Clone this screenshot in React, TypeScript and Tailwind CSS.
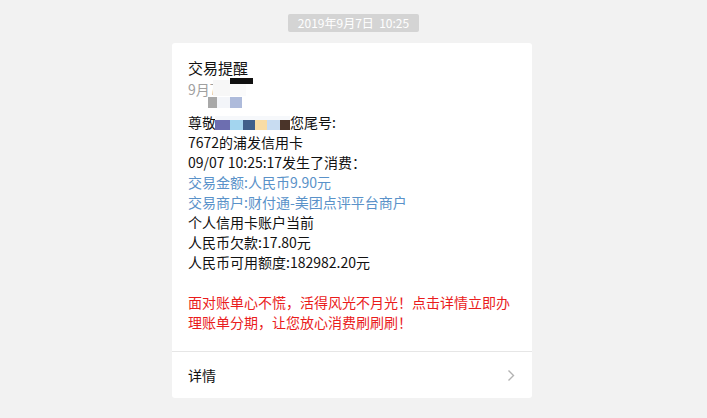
import React from "react";

export default function App() {
  const font = { fontFamily: '"Microsoft YaHei", "Noto Sans CJK SC", "Noto Sans", sans-serif' };
  return (
    <div className="min-h-screen w-full bg-[#f2f2f2] pt-[14px] flex flex-col items-center" style={font}>
      <div className="h-[18px] px-[10px] bg-[#d4d4d4] text-white text-[12px] leading-[18px] whitespace-pre rounded-[2px]">
        2019年9月7日  10:25
      </div>
      <div className="mt-[11px] mr-[3px] w-[360px] bg-white rounded-[3px]">
        <div className="relative px-[16px] pt-[14px] pb-[19px]">
          <div className="text-[15px] leading-[22px] text-[#111]">交易提醒</div>
          <div className="text-[14px] leading-[20px] text-[#a0a0a0]">9月7</div>
          <div className="mt-[13px] text-[14px] leading-[20px] text-[#111]">
            <div className="flex">
              <span>尊敬</span>
              <span className="w-[74px]" />
              <span>您尾号:</span>
            </div>
            <div>7672的浦发信用卡</div>
            <div>09/07 10:25:17发生了消费：</div>
            <div className="text-[#5a92c9]">交易金额:人民币9.90元</div>
            <div className="text-[#5a92c9]">交易商户:财付通-美团点评平台商户</div>
            <div>个人信用卡账户当前</div>
            <div>人民币欠款:17.80元</div>
            <div>人民币可用额度:182982.20元</div>
            <div className="h-[20px]" />
            <div className="text-[#ea1c1c] pr-[4px]">
              面对账单心不慌，活得风光不月光！点击详情立即办理账单分期，让您放心消费刷刷刷！
            </div>
          </div>
          {/* mosaic / censorship overlays */}
          <div className="absolute left-[58px] top-[35px] w-[23px] h-[6px] bg-[#111]" />
          <div className="absolute left-[41px] top-[37px] w-[17px] h-[16px] bg-[#f7f7f7]" />
          <div className="absolute left-[58px] top-[41px] w-[16px] h-[12px] bg-[#fbfbfb]" />
          <div className="absolute left-[36px] top-[54px] w-[9px] h-[11px] bg-[#a8a8a8]" />
          <div className="absolute left-[45px] top-[54px] w-[13px] h-[11px] bg-[#f3f5f9]" />
          <div className="absolute left-[58px] top-[54px] w-[12px] h-[11px] bg-[#aebbdb]" />
          <div className="absolute left-[43px] top-[73px] w-[75px] h-[4px] bg-[#f6f8fb]" />
          <div className="absolute left-[43px] top-[77px] flex h-[10px]">
            <div className="w-[15px] bg-[#6d6eb0]" />
            <div className="w-[13px] bg-[#a3d5ef]" />
            <div className="w-[12px] bg-[#3f5f8a]" />
            <div className="w-[12px] bg-[#f8dca4]" />
            <div className="w-[13px] bg-[#c8dcf1]" />
            <div className="w-[10px] bg-[#4a3429]" />
          </div>
        </div>
        <div className="h-px bg-[#e6e6e6]" />
        <div className="h-[46px] px-[16px] flex items-center justify-between">
          <span className="text-[14px] text-[#111]">详情</span>
          <svg width="8" height="13" viewBox="0 0 8 13" className="mr-[1px]">
            <path d="M1.5 1.5 L6.5 6.5 L1.5 11.5" fill="none" stroke="#b3b3b3" strokeWidth="1.4" />
          </svg>
        </div>
      </div>
    </div>
  );
}
